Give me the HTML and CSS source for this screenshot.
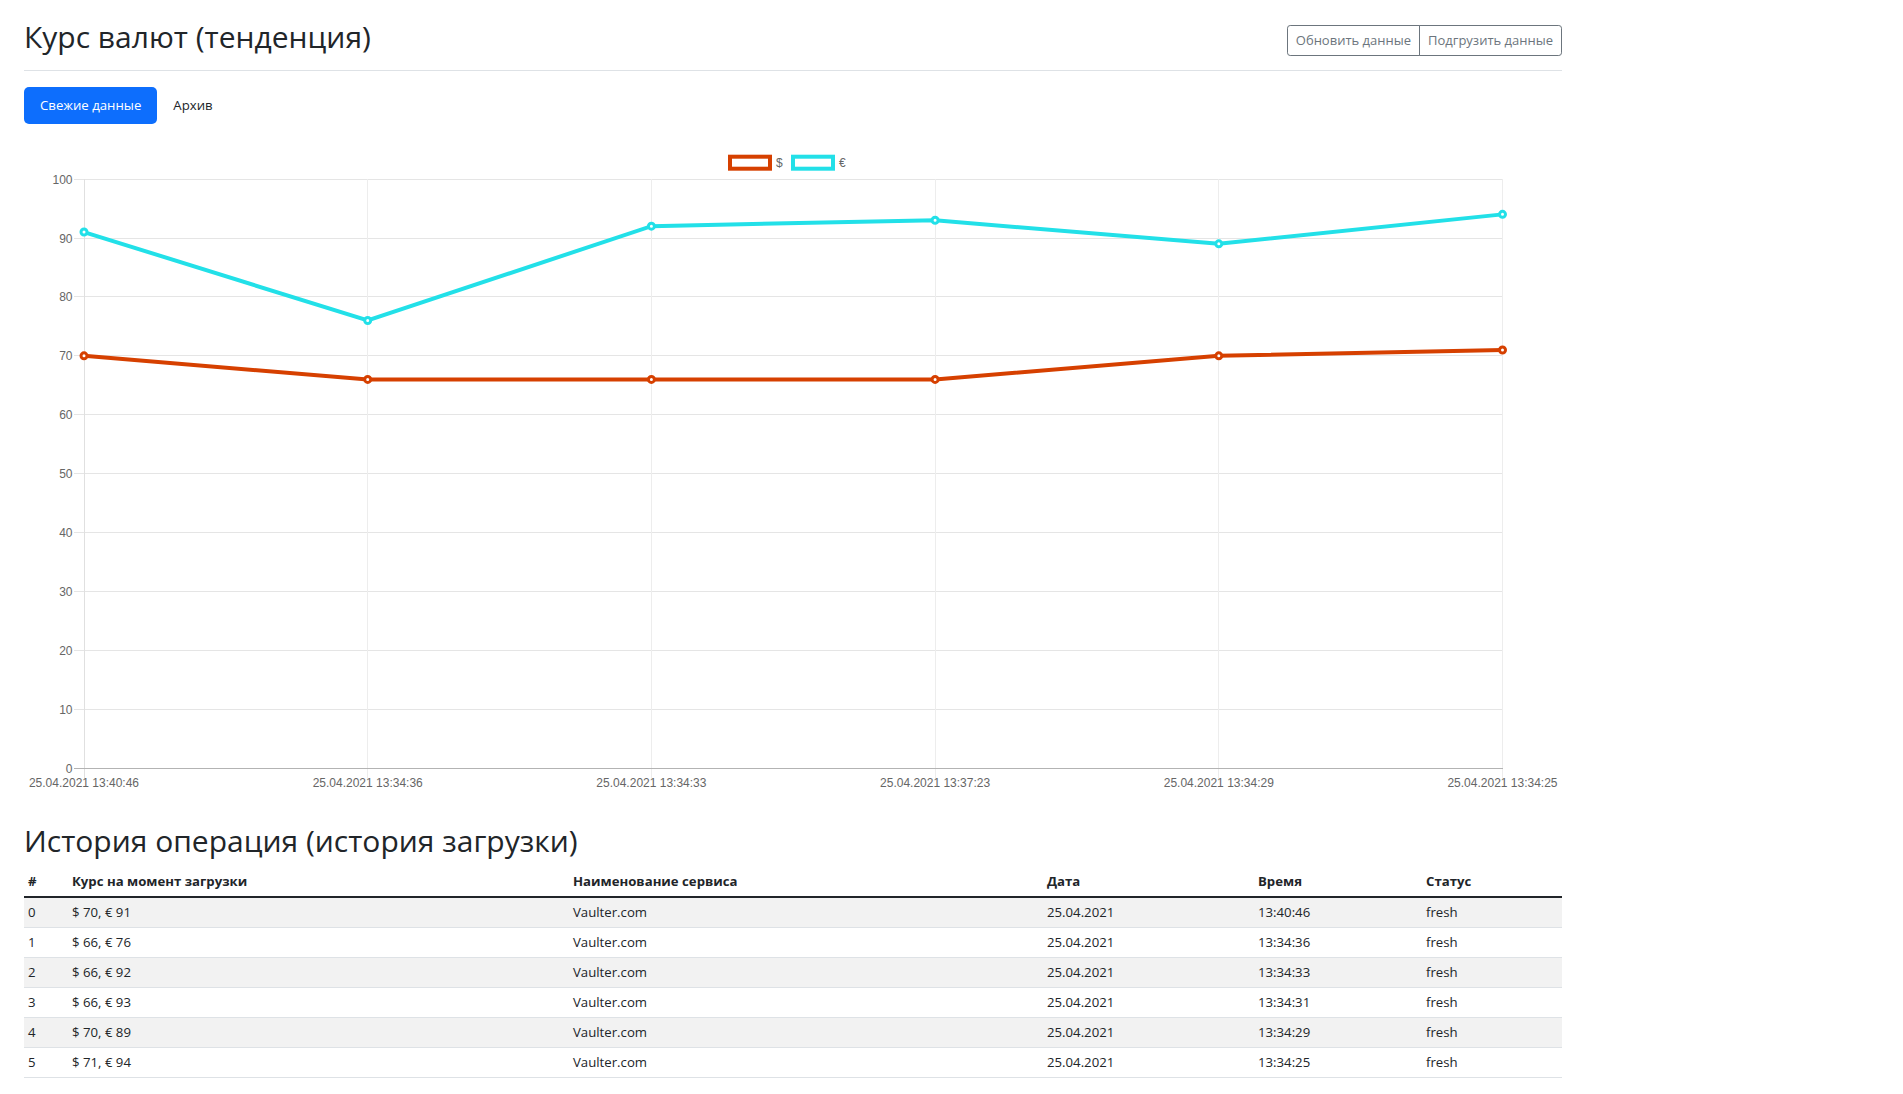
FILE: index.html
```html
<!DOCTYPE html>
<html lang="ru">
<head>
<meta charset="utf-8">
<title>Курс валют</title>
<link rel="stylesheet" href="styles.css">
</head>
<body>
<main class="main">
  <div class="page-header">
    <h1 class="page-title">Курс валют (тенденция)</h1>
    <div class="btn-group">
      <button class="btn btn-outline">Обновить данные</button>
      <button class="btn btn-outline">Подгрузить данные</button>
    </div>
  </div>

  <ul class="nav-pills">
    <li><a class="nav-link active" href="#">Свежие данные</a></li>
    <li><a class="nav-link" href="#">Архив</a></li>
  </ul>

  <svg class="chart" width="1538" height="649" viewBox="0 0 1538 649">
    <g class="legend">
      <rect x="706" y="10.7" width="40" height="12" fill="#fff" stroke="#d64000" stroke-width="4"/>
      <text x="752" y="21" class="legend-text">$</text>
      <rect x="769" y="10.7" width="40" height="12" fill="#fff" stroke="#22e0e8" stroke-width="4"/>
      <text x="815" y="21" class="legend-text">€</text>
    </g>
    <g class="grid-h" stroke="#e5e5e5" stroke-width="1" shape-rendering="crispEdges">
      <line x1="50" x2="1479" y1="33.5" y2="33.5"/>
      <line x1="50" x2="1479" y1="92.5" y2="92.5"/>
      <line x1="50" x2="1479" y1="150.5" y2="150.5"/>
      <line x1="50" x2="1479" y1="209.5" y2="209.5"/>
      <line x1="50" x2="1479" y1="268.5" y2="268.5"/>
      <line x1="50" x2="1479" y1="327.5" y2="327.5"/>
      <line x1="50" x2="1479" y1="386.5" y2="386.5"/>
      <line x1="50" x2="1479" y1="445.5" y2="445.5"/>
      <line x1="50" x2="1479" y1="504.5" y2="504.5"/>
      <line x1="50" x2="1479" y1="563.5" y2="563.5"/>
    </g>
    <g class="grid-v" stroke="#ededed" stroke-width="1" shape-rendering="crispEdges">
      <line x1="343.5" x2="343.5" y1="33" y2="633"/>
      <line x1="627.5" x2="627.5" y1="33" y2="633"/>
      <line x1="911.5" x2="911.5" y1="33" y2="633"/>
      <line x1="1194.5" x2="1194.5" y1="33" y2="633"/>
      <line x1="1478.5" x2="1478.5" y1="33" y2="633"/>
    </g>
    <line x1="60.5" x2="60.5" y1="33" y2="633" stroke="#e0e0e0" stroke-width="1" shape-rendering="crispEdges"/>
    <line x1="50" x2="1479" y1="622.5" y2="622.5" stroke="#b3b3b3" stroke-width="1" shape-rendering="crispEdges"/>
    <g class="y-labels">
      <text x="48.5" y="37.8">100</text>
      <text x="48.5" y="96.8">90</text>
      <text x="48.5" y="154.8">80</text>
      <text x="48.5" y="213.8">70</text>
      <text x="48.5" y="272.8">60</text>
      <text x="48.5" y="331.8">50</text>
      <text x="48.5" y="390.8">40</text>
      <text x="48.5" y="449.8">30</text>
      <text x="48.5" y="508.8">20</text>
      <text x="48.5" y="567.8">10</text>
      <text x="48.5" y="626.8">0</text>
    </g>
    <g class="x-labels">
      <text x="60" y="640.6">25.04.2021 13:40:46</text>
      <text x="343.7" y="640.6">25.04.2021 13:34:36</text>
      <text x="627.4" y="640.6">25.04.2021 13:34:33</text>
      <text x="911.1" y="640.6">25.04.2021 13:37:23</text>
      <text x="1194.8" y="640.6">25.04.2021 13:34:29</text>
      <text x="1478.5" y="640.6">25.04.2021 13:34:25</text>
    </g>
    <polyline class="series" stroke="#22e0e8" points="60,86.05 343.7,174.48 627.4,80.16 911.1,74.27 1194.8,97.85 1478.5,68.37"/>
    <polyline class="series" stroke="#d64000" points="60,209.85 343.7,233.43 627.4,233.43 911.1,233.43 1194.8,209.85 1478.5,203.95"/>
    <g class="points" stroke="#22e0e8">
      <circle cx="60" cy="86.05" r="3"/>
      <circle cx="343.7" cy="174.48" r="3"/>
      <circle cx="627.4" cy="80.16" r="3"/>
      <circle cx="911.1" cy="74.27" r="3"/>
      <circle cx="1194.8" cy="97.85" r="3"/>
      <circle cx="1478.5" cy="68.37" r="3"/>
    </g>
    <g class="points" stroke="#d64000">
      <circle cx="60" cy="209.85" r="3"/>
      <circle cx="343.7" cy="233.43" r="3"/>
      <circle cx="627.4" cy="233.43" r="3"/>
      <circle cx="911.1" cy="233.43" r="3"/>
      <circle cx="1194.8" cy="209.85" r="3"/>
      <circle cx="1478.5" cy="203.95" r="3"/>
    </g>
  </svg>

  <h2 class="section-title">История операция (история загрузки)</h2>

  <table class="table">
    <colgroup>
      <col class="c1"><col class="c2"><col class="c3"><col class="c4"><col class="c5"><col class="c6">
    </colgroup>
    <thead>
      <tr><th>#</th><th>Курс на момент загрузки</th><th>Наименование сервиса</th><th>Дата</th><th>Время</th><th>Статус</th></tr>
    </thead>
    <tbody>
      <tr><td>0</td><td>$ 70, € 91</td><td>Vaulter.com</td><td>25.04.2021</td><td>13:40:46</td><td>fresh</td></tr>
      <tr><td>1</td><td>$ 66, € 76</td><td>Vaulter.com</td><td>25.04.2021</td><td>13:34:36</td><td>fresh</td></tr>
      <tr><td>2</td><td>$ 66, € 92</td><td>Vaulter.com</td><td>25.04.2021</td><td>13:34:33</td><td>fresh</td></tr>
      <tr><td>3</td><td>$ 66, € 93</td><td>Vaulter.com</td><td>25.04.2021</td><td>13:34:31</td><td>fresh</td></tr>
      <tr><td>4</td><td>$ 70, € 89</td><td>Vaulter.com</td><td>25.04.2021</td><td>13:34:29</td><td>fresh</td></tr>
      <tr><td>5</td><td>$ 71, € 94</td><td>Vaulter.com</td><td>25.04.2021</td><td>13:34:25</td><td>fresh</td></tr>
    </tbody>
  </table>
</main>
</body>
</html>
```

FILE: styles.css
```css
* { box-sizing: border-box; }

html, body {
  margin: 0;
  padding: 0;
  background: #fff;
}

body {
  font-family: "Open Sans", "Noto Sans", sans-serif;
  font-size: 15px;
  line-height: 24px;
  color: #212529;
}

.main {
  width: 1586px;
  padding: 0 24px;
}

.page-header {
  display: flex;
  justify-content: space-between;
  align-items: center;
  padding-top: 18px;
  padding-bottom: 8px;
  margin-bottom: 16px;
  border-bottom: 1px solid #dee2e6;
}

.page-title {
  margin: 0 0 6px;
  font-size: 30px;
  line-height: 38.4px;
  font-weight: 400;
  color: #212529;
}

.btn-group {
  display: flex;
}

.btn {
  font-family: inherit;
  font-size: 13px;
  line-height: 21px;
  padding: 4px 8px;
  background: transparent;
  cursor: pointer;
}

.btn-outline {
  color: #6c757d;
  border: 1px solid #6c757d;
}

.btn-group .btn:first-child {
  border-radius: 3.2px 0 0 3.2px;
}

.btn-group .btn + .btn {
  margin-left: -1px;
  border-radius: 0 3.2px 3.2px 0;
}

.nav-pills {
  display: flex;
  list-style: none;
  margin: 0;
  padding: 0;
}

.nav-link {
  display: block;
  padding: 8px 16px;
  line-height: 21px;
  font-size: 13.2px;
  color: #212529;
  text-decoration: none;
  border-radius: 5px;
}

.nav-link.active {
  background: #0d6efd;
  color: #fff;
}

.chart {
  display: block;
  margin: 22px 0 27px;
  font-family: "Liberation Sans", Arial, sans-serif;
  font-size: 12px;
}

.chart text {
  fill: #666;
}

.y-labels text {
  text-anchor: end;
}

.x-labels text {
  text-anchor: middle;
}

.series {
  fill: none;
  stroke-width: 4;
}

.points circle {
  fill: #fff;
  stroke-width: 3;
}

.section-title {
  margin: 0 0 6px;
  font-size: 30px;
  line-height: 38.4px;
  font-weight: 400;
  color: #212529;
}

.table {
  width: 1538px;
  border-collapse: collapse;
  table-layout: fixed;
  font-size: 13.2px;
  line-height: 21px;
  color: #212529;
}

.c1 { width: 44px; }
.c2 { width: 501px; }
.c3 { width: 474px; }
.c4 { width: 211px; }
.c5 { width: 168px; }
.c6 { width: 140px; }

.table th,
.table td {
  padding: 4px;
  text-align: left;
  vertical-align: top;
}

.table th {
  font-weight: 700;
  border-bottom: 2px solid #212529;
}

.table td {
  border-bottom: 1px solid #dee2e6;
}

.table tbody tr:nth-child(odd) td {
  background: #f2f2f2;
}
```
